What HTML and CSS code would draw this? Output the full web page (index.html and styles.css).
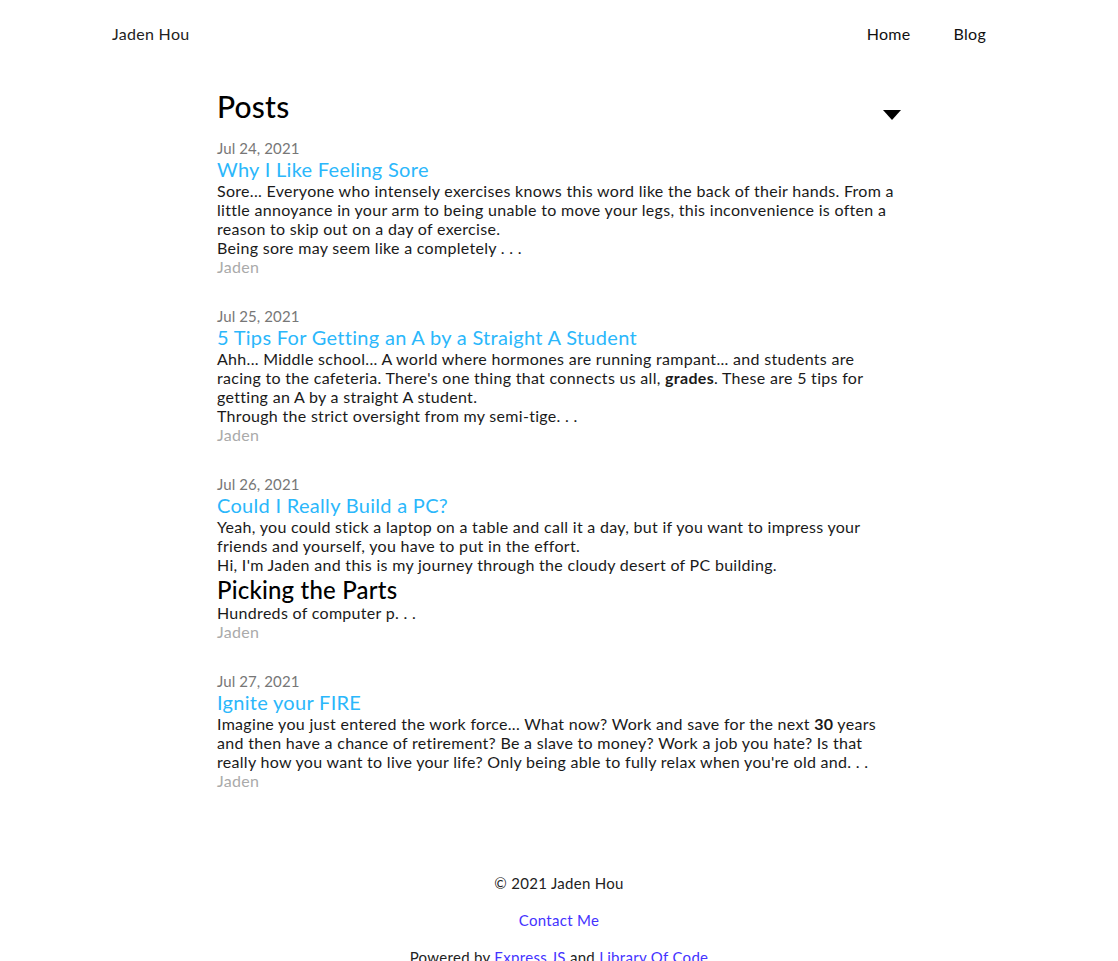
FILE: index.html
```html
<!DOCTYPE html>
<html lang="en">
<head>
<meta charset="utf-8">
<title>Jaden Hou</title>
<link rel="stylesheet" href="styles.css">
</head>
<body>
<header class="site-header">
  <a class="brand" href="#">Jaden Hou</a>
  <nav class="nav">
    <a href="#">Home</a>
    <a href="#">Blog</a>
  </nav>
</header>
<main class="content">
  <div class="posts-head">
    <h1>Posts</h1>
    <span class="caret"></span>
  </div>
  <article class="post">
    <div class="date">Jul 24, 2021</div>
    <a class="title" href="#">Why I Like Feeling Sore</a>
    <div class="excerpt">
      <p>Sore... Everyone who intensely exercises knows this word like the back of their hands. From a little annoyance in your arm to being unable to move your legs, this inconvenience is often a reason to skip out on a day of exercise.</p>
      <p>Being sore may seem like a completely . . .</p>
    </div>
    <div class="author">Jaden</div>
  </article>
  <article class="post">
    <div class="date">Jul 25, 2021</div>
    <a class="title" href="#">5 Tips For Getting an A by a Straight A Student</a>
    <div class="excerpt">
      <p>Ahh... Middle school... A world where hormones are running rampant... and students are racing to the cafeteria. There's one thing that connects us all, <b>grades</b>. These are 5 tips for getting an A by a straight A student.</p>
      <p>Through the strict oversight from my semi-tige. . .</p>
    </div>
    <div class="author">Jaden</div>
  </article>
  <article class="post">
    <div class="date">Jul 26, 2021</div>
    <a class="title" href="#">Could I Really Build a PC?</a>
    <div class="excerpt">
      <p>Yeah, you could stick a laptop on a table and call it a day, but if you want to impress your friends and yourself, you have to put in the effort.</p>
      <p>Hi, I'm Jaden and this is my journey through the cloudy desert of PC building.</p>
      <h2>Picking the Parts</h2>
      <p>Hundreds of computer p. . .</p>
    </div>
    <div class="author">Jaden</div>
  </article>
  <article class="post">
    <div class="date">Jul 27, 2021</div>
    <a class="title" href="#">Ignite your FIRE</a>
    <div class="excerpt">
      <p>Imagine you just entered the work force... What now? Work and save for the next <b>30</b> years and then have a chance of retirement? Be a slave to money? Work a job you hate? Is that really how you want to live your life? Only being able to fully relax when you're old and. . .</p>
    </div>
    <div class="author">Jaden</div>
  </article>
</main>
<footer class="site-footer">
  <p>© 2021 Jaden Hou</p>
  <p><a href="#">Contact Me</a></p>
  <p>Powered by <a href="#">Express JS</a> and <a href="#">Library Of Code</a></p>
</footer>
</body>
</html>
```

FILE: styles.css
```css
html, body {
  margin: 0;
  padding: 0;
  background: #fff;
}
body {
  font-family: "Lato", "Liberation Sans", sans-serif;
  color: #1a1a1a;
  font-size: 16px;
  letter-spacing: 0.3px;
}
a { text-decoration: none; }
.site-header {
  display: flex;
  justify-content: space-between;
  align-items: center;
  padding: 22px 112px 0 112px;
  height: 22px;
}
.brand {
  color: #222;
  font-size: 16px;
}
.nav {
  display: flex;
}
.nav a {
  color: #111;
  font-size: 16px;
  padding: 0 20px;
}
.nav a:first-child { padding-left: 0; margin-right: 3px; }
.content {
  width: 684px;
  margin: 0 auto;
  padding-top: 42px;
}
.posts-head {
  display: flex;
  justify-content: space-between;
  align-items: center;
  height: 40px;
}
.posts-head h1 {
  margin: 0;
  font-size: 30px;
  font-weight: 500;
  color: #000;
  letter-spacing: 0.2px;
}
.caret {
  width: 0;
  height: 0;
  border-left: 9px solid transparent;
  border-right: 9px solid transparent;
  border-top: 10px solid #000;
  margin-top: 18px;
}
.post {
  margin-top: 12px;
  margin-bottom: 30px;
  display: flex;
  flex-direction: column;
}
.date {
  color: #777;
  font-size: 15px;
  line-height: 20px;
  letter-spacing: 0.1px;
}
.title {
  color: #2bb7fb;
  font-size: 20px;
  line-height: 23px;
}
.excerpt p {
  margin: 0;
  line-height: 19px;
}
.excerpt h2 {
  margin: 2px 0 0;
  font-size: 24px;
  line-height: 27px;
  font-weight: 500;
  color: #000;
  letter-spacing: 0.2px;
}
.excerpt b { font-weight: 700; }
.author {
  color: #aaa;
  line-height: 19px;
}
.site-footer {
  text-align: center;
  font-size: 15px;
  color: #222;
  padding-top: 54px;
}
.site-footer p {
  margin: 0 0 19px;
  line-height: 18px;
}
.site-footer a { color: #4433ff; }
```
